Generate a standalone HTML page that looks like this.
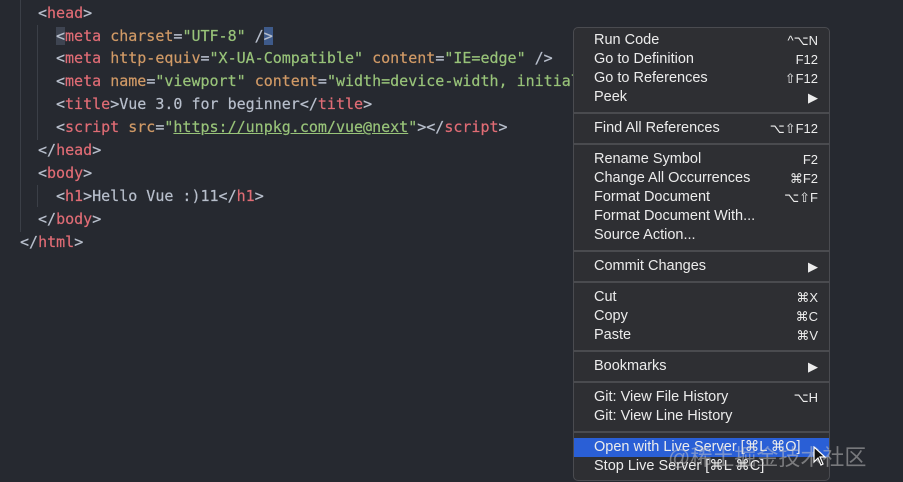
<!DOCTYPE html>
<html><head><meta charset="utf-8"><style>
body{margin:0;width:903px;height:482px;overflow:hidden;background:#262930;position:relative;font-family:"Liberation Sans",sans-serif}
.code{position:absolute;left:0;top:0;font-family:"DejaVu Sans Mono","Liberation Mono",monospace;font-size:15px;color:#b8bfcc;white-space:pre;-webkit-text-stroke:0.2px}
.l{position:absolute;height:23px;line-height:23px}
.t{color:#e06c75}.a{color:#d19a66}.s{color:#98c379}.p{color:#b8bfcc}
.guide{position:absolute;width:1px;background:#3b3f47}
.menu{position:absolute;left:573px;top:27px;width:257px;height:454px;background:#2e2f33;border:1px solid #4a4b50;border-radius:5px;box-sizing:border-box}
.it{position:absolute;left:0;width:255px;height:19px;line-height:19px;color:#ececec;font-size:14.5px}
.it span{position:absolute;left:20px}
.it b{position:absolute;right:11px;font-weight:normal;font-size:13px}
.sep{position:absolute;left:0;width:255px;height:2px;background:#4a4b4f}
.hl{background:#2a5fd6}
.wm{position:absolute;left:668px;top:440px;font-size:22px;color:rgba(200,200,200,.5);font-family:"Liberation Sans","Noto Sans CJK SC",sans-serif}
</style></head><body>
<div class="guide" style="left:20px;top:0;height:232px"></div>
<div class="guide" style="left:37px;top:25px;height:115px"></div>
<div class="guide" style="left:37px;top:185px;height:22px"></div>
<div class="code">
<div class="l" style="left:38px;top:2px"><span class="p">&lt;</span><span class="t">head</span>&gt;</div>
<div class="l" style="left:56px;top:25px"><span style="background:#3e4451">&lt;</span><span class="t">meta</span> <span class="a">charset</span>=<span class="s">"UTF-8"</span> /<span style="background:#3e5a8a">&gt;</span></div>
<div class="l" style="left:56px;top:47px">&lt;<span class="t">meta</span> <span class="a">http-equiv</span>=<span class="s">"X-UA-Compatible"</span> <span class="a">content</span>=<span class="s">"IE=edge"</span> /&gt;</div>
<div class="l" style="left:56px;top:70px">&lt;<span class="t">meta</span> <span class="a">name</span>=<span class="s">"viewport"</span> <span class="a">content</span>=<span class="s">"width=device-width, initial-scale=1.0"</span> /&gt;</div>
<div class="l" style="left:56px;top:93px">&lt;<span class="t">title</span>&gt;Vue 3.0 for beginner&lt;/<span class="t">title</span>&gt;</div>
<div class="l" style="left:56px;top:116px">&lt;<span class="t">script</span> <span class="a">src</span>=<span class="s">"<u>https://unpkg.com/vue@next</u>"</span>&gt;&lt;/<span class="t">script</span>&gt;</div>
<div class="l" style="left:38px;top:139px">&lt;/<span class="t">head</span>&gt;</div>
<div class="l" style="left:38px;top:162px">&lt;<span class="t">body</span>&gt;</div>
<div class="l" style="left:56px;top:185px">&lt;<span class="t">h1</span>&gt;Hello Vue :)11&lt;/<span class="t">h1</span>&gt;</div>
<div class="l" style="left:38px;top:208px">&lt;/<span class="t">body</span>&gt;</div>
<div class="l" style="left:20px;top:231px">&lt;/<span class="t">html</span>&gt;</div>
</div>
<div class="menu">
<div class="it" style="top:3px"><span>Run Code</span><b>^⌥N</b></div>
<div class="it" style="top:22px"><span>Go to Definition</span><b>F12</b></div>
<div class="it" style="top:41px"><span>Go to References</span><b>⇧F12</b></div>
<div class="it" style="top:60px"><span>Peek</span><b>▶</b></div>
<div class="sep" style="top:84px"></div>
<div class="it" style="top:91px"><span>Find All References</span><b>⌥⇧F12</b></div>
<div class="sep" style="top:115px"></div>
<div class="it" style="top:122px"><span>Rename Symbol</span><b>F2</b></div>
<div class="it" style="top:141px"><span>Change All Occurrences</span><b>⌘F2</b></div>
<div class="it" style="top:160px"><span>Format Document</span><b>⌥⇧F</b></div>
<div class="it" style="top:179px"><span>Format Document With...</span></div>
<div class="it" style="top:198px"><span>Source Action...</span></div>
<div class="sep" style="top:222px"></div>
<div class="it" style="top:229px"><span>Commit Changes</span><b>▶</b></div>
<div class="sep" style="top:253px"></div>
<div class="it" style="top:260px"><span>Cut</span><b>⌘X</b></div>
<div class="it" style="top:279px"><span>Copy</span><b>⌘C</b></div>
<div class="it" style="top:298px"><span>Paste</span><b>⌘V</b></div>
<div class="sep" style="top:322px"></div>
<div class="it" style="top:329px"><span>Bookmarks</span><b>▶</b></div>
<div class="sep" style="top:353px"></div>
<div class="it" style="top:360px"><span>Git: View File History</span><b>⌥H</b></div>
<div class="it" style="top:379px"><span>Git: View Line History</span></div>
<div class="sep" style="top:403px"></div>
<div class="it hl" style="top:410px"><span>Open with Live Server [⌘L ⌘O]</span></div>
<div class="it" style="top:429px"><span>Stop Live Server [⌘L ⌘C]</span></div>
</div>
<div class="wm">@稀土掘金技术社区</div>
<svg style="position:absolute;left:813px;top:446px" width="14" height="20" viewBox="0 0 14 20"><path d="M1 1 L1 16 L5 12 L8 19 L10 18 L7 11 L12 11 Z" fill="#111" stroke="#fff" stroke-width="1.2"/></svg>
</body></html>
